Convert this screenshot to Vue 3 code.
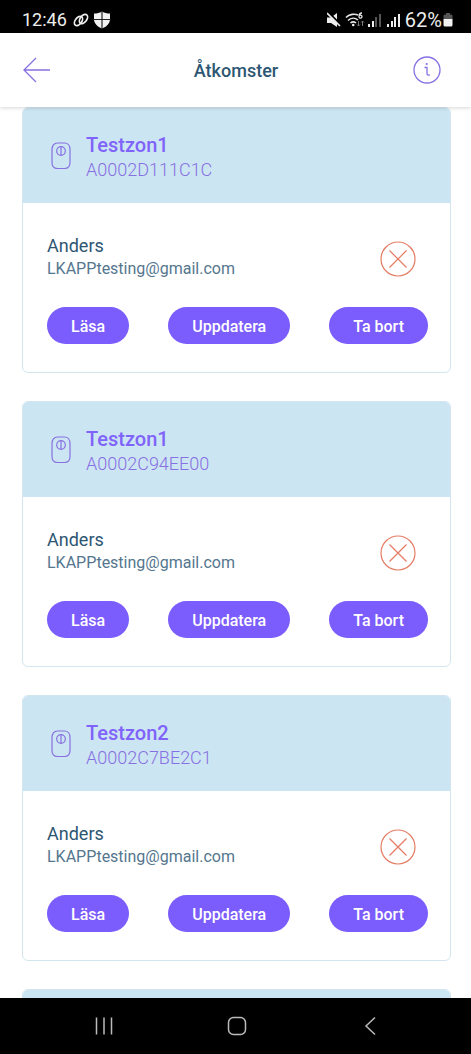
<script setup>
const zones = [
  { id: 1, name: 'Testzon1', serial: 'A0002D111C1C', user: 'Anders', email: 'LKAPPtesting@gmail.com' },
  { id: 2, name: 'Testzon1', serial: 'A0002C94EE00', user: 'Anders', email: 'LKAPPtesting@gmail.com' },
  { id: 3, name: 'Testzon2', serial: 'A0002C7BE2C1', user: 'Anders', email: 'LKAPPtesting@gmail.com' }
]
const actions = ['Läsa', 'Uppdatera', 'Ta bort']
</script>

<template>
  <div class="screen">
    <div class="status">
      <div class="status-group">
        <span class="clock">12:46</span>
        <svg class="link-icon" width="16" height="16" viewBox="0 0 16 16" aria-hidden="true">
          <g fill="none" stroke="#eee" stroke-width="1.8">
            <ellipse cx="5.500" cy="9" rx="3.200" ry="5.200" transform="rotate(38 5.500 9)" />
            <ellipse cx="10.500" cy="7" rx="3.200" ry="5.200" transform="rotate(38 10.500 7)" />
          </g>
        </svg>
        <svg width="18" height="18" viewBox="0 0 18 18" aria-hidden="true">
          <path d="M9 .5 C11.5 2 14 2.6 17 2.6 V8 C17 12.5 13.5 15.8 9 17.5 C4.5 15.8 1 12.5 1 8 V2.6 C4 2.6 6.5 2 9 .5Z" fill="#f2f2f2" />
          <path d="M9 0V18M0 8.5H18" stroke="#222" stroke-width="1.2" />
        </svg>
      </div>
      <div class="status-group">
        <svg class="signals" width="74" height="18" viewBox="0 0 74 18" aria-hidden="true">
          <path d="M0 6.500H4L10 2V16L4 12H0Z" fill="#eee" />
          <path d="M1 1L14 14" stroke="#000" stroke-width="2" />
          <path d="M0 2L13 15" stroke="#eee" stroke-width="1.6" />
          <g fill="none" stroke="#e5e5e5" stroke-width="1.6">
            <path d="M19 6.500C22 3 28 2.500 31 4M21 9.500C24 6.500 28 6.500 31 9M23.500 12C25.500 10.300 27 10.300 29 12" />
            <path d="M35 2C32.500 2 32 4 32 5.500A1.500 1.500 0 1 0 32.500 4.500" stroke-width="1.3" />
          </g>
          <circle cx="26.200" cy="14" r="1.300" fill="#eee" />
          <path d="M31.500 10V15M30 13.500L31.500 15L33 13.500M35.500 15V10M34 11.500L35.500 10L37 11.500" fill="none" stroke="#777" />
          <path d="M41 13h2v3h-2zM45 10h2v6h-2z" fill="#eee" />
          <path d="M48 6h2v10h-2zM52 3h2v13h-2z" fill="#555" />
          <path d="M60 13h2v3h-2zM64 10h2v6h-2zM67 6h2v10h-2zM71 3h2v13h-2z" fill="#eee" />
        </svg>
        <span class="percent">62%</span>
        <svg width="10" height="14" viewBox="0 0 10 14" aria-hidden="true">
          <path d="M3 0H7V1.500H8.500Q9.500 1.500 9.500 3V6H.5V3Q.5 1.500 1.500 1.500H3Z" fill="#555" />
          <path d="M.5 6H9.500V12Q9.500 13.500 8 13.500H2Q.5 13.500 .5 12Z" fill="#f2f2f2" />
        </svg>
      </div>
    </div>

    <header class="topbar">
      <button class="icon-button" aria-label="Tillbaka">
        <svg width="28" height="28" viewBox="0 0 28 28" aria-hidden="true">
          <path d="M27 14H1M13 2L1 14L13 26" fill="none" stroke="#8770e2" stroke-width="1.3" />
        </svg>
      </button>
      <h1>Åtkomster</h1>
      <button class="icon-button info" aria-label="Information">
        <svg width="28" height="28" viewBox="0 0 28 28" aria-hidden="true">
          <g fill="none" stroke="#8770e2" stroke-width="1.3">
            <circle cx="14" cy="14" r="13" />
            <path d="M11.500 11.500H14V17.500Q14 19.500 16.800 19" />
          </g>
          <circle cx="13.700" cy="8" r="1.100" fill="#8770e2" />
        </svg>
      </button>
    </header>

    <main class="list">
      <article v-for="zone in zones" :key="zone.id" class="card">
        <div class="card-head">
          <svg width="20" height="28" viewBox="0 0 20 28" aria-hidden="true">
            <g fill="none" stroke="#8770e2" stroke-width="1.2">
              <path d="M6.500 1H13.500C17 1 19 4 19 7.500V20.500C19 24 17 26.500 13.500 26.500H6.500C3 26.500 1 24 1 20.500V7.500C1 4 3 1 6.500 1Z" />
              <circle cx="10" cy="9" r="4.300" />
              <path d="M10 5V13" />
            </g>
          </svg>
          <div>
            <h2>{{ zone.name }}</h2>
            <p class="serial">{{ zone.serial }}</p>
          </div>
        </div>
        <div class="card-body">
          <div class="person">
            <div>
              <p class="user">{{ zone.user }}</p>
              <p class="email">{{ zone.email }}</p>
            </div>
            <svg width="36" height="36" viewBox="0 0 36 36" aria-hidden="true">
              <g fill="none" stroke="#e57b62" stroke-width="1.2">
                <circle cx="18" cy="18" r="17" />
                <path d="M9.500 9.500L26.500 26.500M26.500 9.500L9.500 26.500" />
              </g>
            </svg>
          </div>
          <div class="actions">
            <button v-for="action in actions" :key="action" class="pill">{{ action }}</button>
          </div>
        </div>
      </article>
      <article class="card"><div class="card-head"></div></article>
    </main>

    <nav class="system-nav">
      <button aria-label="Senaste appar">
        <svg width="20" height="20" viewBox="0 0 20 20" aria-hidden="true">
          <path d="M2.500 1.500V18.500M10 1.500V18.500M17.500 1.500V18.500" stroke="#bbb" stroke-width="1.5" />
        </svg>
      </button>
      <button aria-label="Hem">
        <svg width="20" height="20" viewBox="0 0 20 20" aria-hidden="true">
          <rect x="1.500" y="1.500" width="17" height="17" rx="5" fill="none" stroke="#bbb" stroke-width="1.5" />
        </svg>
      </button>
      <button aria-label="Bakåt">
        <svg width="20" height="20" viewBox="0 0 20 20" aria-hidden="true">
          <path d="M15 1.500L6 10L15 18.500" fill="none" stroke="#bbb" stroke-width="1.5" />
        </svg>
      </button>
    </nav>
  </div>
</template>

<style>
body {
  margin: 0;
  background: #fff;
}
</style>

<style scoped>
.screen {
  display: flex;
  flex-direction: column;
  height: 100vh;
  overflow: hidden;
  background: #fff;
  font-family: Roboto, "Liberation Sans", sans-serif;
}
h1, h2, p {
  margin: 0;
}
svg {
  display: block;
  flex: none;
}
button {
  padding: 0;
  border: 0;
  background: none;
  font: inherit;
  cursor: pointer;
}
.status {
  display: flex;
  flex: none;
  align-items: center;
  justify-content: space-between;
  height: 33px;
  padding: 7px 18px 0 22px;
  box-sizing: border-box;
  background: #000;
  color: #eee;
}
.status-group {
  display: flex;
  align-items: center;
}
.clock {
  font-size: 18px;
  line-height: 24px;
}
.link-icon {
  margin: 0 4px 0 6px;
}
.signals {
  margin-right: 4px;
}
.percent {
  margin-right: 1px;
  font-size: 20px;
  line-height: 24px;
}
.topbar {
  position: relative;
  z-index: 1;
  display: grid;
  grid-template-columns: 1fr auto 1fr;
  flex: none;
  align-items: center;
  height: 74px;
  padding: 0 22px 0 23px;
  box-sizing: border-box;
  background: #fff;
  box-shadow: 0 1px 4px rgba(0, 0, 0, 0.16);
}
.icon-button {
  justify-self: start;
}
.info {
  justify-self: end;
  margin-right: 8px;
}
h1 {
  padding-top: 2px;
  color: #2d5673;
  font-size: 18px;
  font-weight: 500;
  line-height: 24px;
}
.list {
  flex: 1;
  min-height: 0;
  padding: 0 20px 0 22px;
  overflow: hidden;
}
.card {
  margin-bottom: 28px;
  border: 1px solid #d3e6f0;
  border-radius: 6px;
  overflow: hidden;
}
.card-head {
  display: flex;
  align-items: flex-start;
  gap: 15px;
  height: 95px;
  padding: 25px 28px 0;
  box-sizing: border-box;
  background: #cce5f2;
  color: #8063fa;
}
.card-head svg {
  margin-top: 9px;
}
h2 {
  font-size: 20px;
  font-weight: 500;
  line-height: 25px;
}
.serial {
  color: #8770e2;
  font-size: 18px;
  font-weight: 300;
  line-height: 24px;
}
.card-body {
  padding: 31px 22px 28px 24px;
}
.person {
  display: flex;
  align-items: flex-start;
  justify-content: space-between;
  padding-right: 12px;
}
.person svg {
  margin-top: 7px;
}
.user {
  color: #2d5673;
  font-size: 18px;
  line-height: 24px;
}
.email {
  color: #54768e;
  font-size: 16px;
  line-height: 22px;
}
.actions {
  display: flex;
  justify-content: space-between;
  margin-top: 27px;
}
.pill {
  height: 37px;
  padding: 2px 24px 0;
  border-radius: 20px;
  background: #7b5cfc;
  color: #fff;
  font-size: 16px;
  font-weight: 500;
  line-height: 20px;
}
.system-nav {
  display: flex;
  flex: none;
  align-items: center;
  justify-content: space-between;
  height: 56px;
  padding: 0 91px 0 94px;
  box-sizing: border-box;
  background: #000;
}
</style>
